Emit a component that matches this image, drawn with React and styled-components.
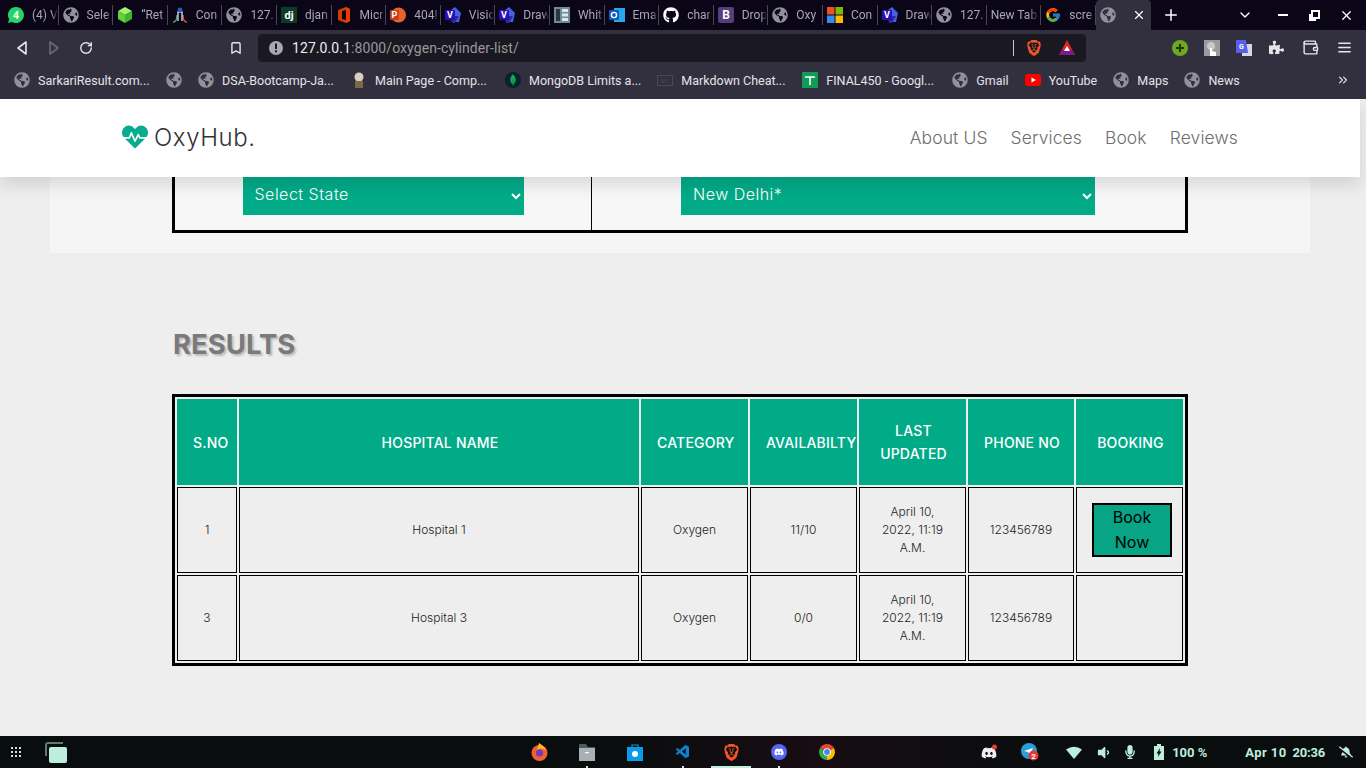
import React from "react";
import styled, { createGlobalStyle } from "styled-components";
import { FaGlobeAmericas, FaGithub, FaHeartbeat, FaDiscord, FaPuzzlePiece, FaMicrophone, FaVolumeDown, FaBellSlash } from "react-icons/fa";
import { FcGoogle } from "react-icons/fc";
import { VscVscode } from "react-icons/vsc";
import { SiBrave, SiMongodb } from "react-icons/si";
import { LuChevronDown, LuPlus, LuX, LuRotateCw, LuBookmark, LuMenu, LuWallet, LuChevronsRight } from "react-icons/lu";

const teal = "#02ab88";
const mint = "#bdeedd";
const chromeBg = "#32303f";

const GlobalStyle = createGlobalStyle`
  html, body { margin: 0; padding: 0; height: 100%; overflow: hidden; }
  body { font-family: "Inter", "Noto Sans", sans-serif; background: #eee; }
  #root { height: 100%; }
  * { box-sizing: border-box; }
`;

const Screen = styled.div`
  width: 1366px;
  height: 768px;
  display: flex;
  flex-direction: column;
  overflow: hidden;
`;

/* browser chrome */
const TabStrip = styled.div`
  height: 30px;
  flex: none;
  display: flex;
  align-items: center;
  padding-left: 4px;
  background: #0a0618;
  font: 12px "Roboto", sans-serif;
`;

const Tab = styled.div`
  width: ${(p) => (p.$active ? "55px" : "54.6px")};
  height: ${(p) => (p.$active ? "30px" : "20px")};
  flex: none;
  display: flex;
  align-items: center;
  gap: 8px;
  padding-left: 4px;
  color: #a9a7b2;
  white-space: nowrap;
  overflow: hidden;
  border-right: 1px solid ${(p) => (p.$active ? "transparent" : "#4a4856")};
  background: ${(p) => (p.$active ? chromeBg : "transparent")};
  border-radius: ${(p) => (p.$active ? "4px 4px 0 0" : "0")};
  svg { flex: none; }
`;

const TabTitle = styled.span`
  flex: 1;
  overflow: hidden;
  -webkit-mask-image: linear-gradient(to right, #000 75%, transparent 100%);
  mask-image: linear-gradient(to right, #000 75%, transparent 100%);
`;

const StripButton = styled.div`
  flex: none;
  width: ${(p) => p.$width}px;
  margin-left: ${(p) => p.$left || 0}px;
  display: flex;
  justify-content: center;
  align-items: center;
  color: #fff;
`;

const Toolbar = styled.div`
  height: 35px;
  flex: none;
  display: flex;
  align-items: center;
  background: ${chromeBg};
`;

const ToolButton = styled.div`
  flex: none;
  width: ${(p) => p.$width || 32}px;
  margin-left: ${(p) => p.$left || 0}px;
  display: flex;
  justify-content: center;
  align-items: center;
  color: ${(p) => p.$color || "#e6e5ea"};
`;

const AddressBar = styled.div`
  width: 828px;
  height: 28px;
  margin-left: 6px;
  flex: none;
  display: flex;
  align-items: center;
  padding-left: 10px;
  border-radius: 4px;
  background: #1a1922;
  font: 14px "Roboto", sans-serif;
  letter-spacing: 0.08px;
  color: #99979f;
`;

const Host = styled.span`
  color: #ececf0;
  margin-left: 8px;
`;

const AddressEnd = styled.div`
  margin-left: auto;
  display: flex;
  align-items: center;
  gap: 17px;
  padding-right: 11px;
`;

const Divider = styled.span`
  width: 1px;
  height: 16px;
  margin-right: -5px;
  background: #c9c8ce;
`;

const BookmarkBar = styled.div`
  height: 34px;
  flex: none;
  display: flex;
  align-items: center;
  gap: 16px;
  padding: 0 14px 4px;
  background: ${chromeBg};
  font: 12.5px "Roboto", sans-serif;
  color: #e4e3e8;
`;

const BookmarkItem = styled.div`
  display: flex;
  align-items: center;
  gap: 8px;
  white-space: nowrap;
  svg { flex: none; }
`;

const BookmarkLabel = styled.span`
  min-width: ${(p) => p.$width || 0}px;
`;

const MoreButton = styled.div`
  margin-left: auto;
  margin-right: 2px;
  display: flex;
`;

/* page */
const Page = styled.main`
  flex: 1;
  min-height: 0;
  overflow: hidden;
  background: #eee;
`;

const Navbar = styled.header`
  position: relative;
  z-index: 2;
  width: 1360px;
  height: 78px;
  display: flex;
  align-items: center;
  justify-content: space-between;
  padding: 0 122px 2px;
  background: #fff;
  box-shadow: 0 8px 16px rgba(0, 0, 0, 0.12);
`;

const Logo = styled.a`
  display: flex;
  align-items: center;
  gap: 6px;
  font-size: 24px;
  font-weight: 300;
  letter-spacing: 0.6px;
  color: #333;
  svg { color: #06ad8c; }
`;

const NavLinks = styled.nav`
  display: flex;
  gap: 23px;
`;

const NavLink = styled.a`
  font-size: 17.5px;
  font-weight: 300;
  letter-spacing: 0.1px;
  color: #6e6e6e;
`;

const FilterPanel = styled.section`
  width: 1260px;
  margin-left: 50px;
  padding: 0 122px 20px;
  background: #f5f5f5;
`;

const FilterTable = styled.div`
  display: grid;
  grid-template-columns: 416px 1fr;
  border: 3px solid #000;
  border-top: 0;
  background: #f7f7f7;
`;

const FilterCell = styled.div`
  display: flex;
  justify-content: center;
  padding: 0 ${(p) => (p.$divided ? "1px" : "0")} 15px 0;
  border-left: ${(p) => (p.$divided ? "1px solid #000" : "0")};
`;

const FilterSelect = styled.select`
  width: ${(p) => p.$width}px;
  height: 38px;
  padding: 0 4px 4px 8px;
  border: 0;
  border-radius: 0;
  background-color: ${teal};
  color: #fff;
  font-family: "Inter", sans-serif;
  font-size: 16px;
  font-weight: 300;
  letter-spacing: 0.5px;
`;

const Results = styled.section`
  padding: 73px 0 0 172px;
`;

const ResultsTitle = styled.h2`
  margin: 0 0 32px;
  padding-left: 1px;
  height: 36px;
  font-size: 27.5px;
  line-height: 36px;
  font-weight: 700;
  color: #7a7a7a;
  text-shadow: 2px 2px 2px #bdbdbd;
`;

const Table = styled.table`
  width: 1016px;
  table-layout: fixed;
  border-collapse: separate;
  border-spacing: 2px;
  border: 3px solid #000;
  background: #eee;
`;

const HeadCell = styled.th`
  width: ${(p) => p.$width}px;
  height: 86px;
  padding: 0 14px 0 16px;
  background: ${teal};
  color: #fff;
  font-size: 14px;
  line-height: 23px;
  font-weight: 500;
  letter-spacing: 0.2px;
  text-align: center;
`;

const Cell = styled.td`
  height: 86px;
  padding: 0 15px;
  border: 1px solid #000;
  color: #222;
  font-size: 12px;
  line-height: 18px;
  font-weight: 300;
  text-align: center;
`;

const BookButton = styled.button`
  display: block;
  width: 80px;
  height: 54px;
  margin: 0 auto;
  padding: 0 12px;
  border: 2px solid #000;
  background: #07a586;
  color: #000;
  font-family: "Inter", sans-serif;
  font-size: 16px;
  line-height: 25px;
  font-weight: 400;
`;

/* desktop taskbar */
const Taskbar = styled.footer`
  height: 32px;
  flex: none;
  display: grid;
  grid-template-columns: 1fr auto 1fr;
  align-items: center;
  background: linear-gradient(90deg, #0a0d0e 45%, #170d12 60%, #0a0d0e 75%);
  color: ${mint};
`;

const TaskLeft = styled.div`
  display: flex;
  align-items: center;
  gap: 24px;
  padding-left: 11px;
`;

const TaskCenter = styled.div`
  display: flex;
`;

const TaskIcon = styled.div`
  position: relative;
  width: 48px;
  height: 32px;
  display: flex;
  justify-content: center;
  align-items: center;
  &::after {
    content: "";
    position: absolute;
    bottom: 0;
    left: ${(p) => (p.$state === "active" ? "4px" : "23px")};
    right: ${(p) => (p.$state === "active" ? "4px" : "23px")};
    height: 2px;
    background: ${(p) => (p.$state ? mint : "transparent")};
  }
`;

const Tray = styled.div`
  display: flex;
  align-items: center;
  justify-content: flex-end;
  padding-right: 12px;
  font: 700 13px "Roboto", sans-serif;
  white-space: nowrap;
`;

const TraySlot = styled.div`
  display: flex;
  align-items: center;
  justify-content: center;
  flex: none;
  margin-left: ${(p) => p.$left || 0}px;
  width: ${(p) => (p.$width ? `${p.$width}px` : "auto")};
  letter-spacing: ${(p) => p.$tracking || 0}px;
`;

const Globe = ({ size = 15 }) => <FaGlobeAmericas size={size} color="#92919b" />;

const Whatsapp = () => (
  <svg width="16" height="16" viewBox="0 0 16 16">
    <path d="M8 0a8 8 0 0 0-6.8 12.2L0 16l3.9-1.1A8 8 0 1 0 8 0z" fill="#25d366" />
    <text x="8" y="11.6" fontSize="10.5" fontWeight="700" fill="#fff" textAnchor="middle" fontFamily="Roboto">4</text>
  </svg>
);
const Cube = () => (
  <svg width="16" height="16" viewBox="0 0 16 16">
    <path d="M8 0l7 4-7 4-7-4z" fill="#a6f06a" />
    <path d="M1 4l7 4v8l-7-4z" fill="#5fd33c" />
    <path d="M15 4l-7 4v8l7-4z" fill="#3fb52d" />
  </svg>
);
const Conda = () => (
  <svg width="16" height="16" viewBox="0 0 16 16" fill="none">
    <path d="M1 15c3 0 4-3 4-7" stroke="#4caf50" strokeWidth="1.4" />
    <path d="M15 15c-3 0-4-3-4-7" stroke="#e0523a" strokeWidth="1.4" />
    <path d="M6 14V5h4v9" stroke="#c7d3e6" strokeWidth="1.4" />
    <circle cx="8" cy="3" r="2.4" fill="#2d55b5" />
  </svg>
);
const Django = () => (
  <svg width="16" height="16" viewBox="0 0 16 16">
    <rect width="16" height="16" fill="#0c3c26" />
    <text x="8" y="12" fontSize="11" fontWeight="700" fill="#fff" textAnchor="middle" fontFamily="Roboto">dj</text>
  </svg>
);
const Office = () => (
  <svg width="16" height="16" viewBox="0 0 16 16">
    <path d="M2 3l8-3 4 2v12l-4 2-8-3z" fill="#d83b01" />
    <path d="M6 4l4-1v10l-4-1z" fill="#0a0618" />
    <path d="M10 0l4 2v12l-4 2z" fill="#eb3c00" />
  </svg>
);
const Powerpoint = () => (
  <svg width="16" height="16" viewBox="0 0 16 16">
    <circle cx="8.5" cy="8" r="7.5" fill="#e8622c" />
    <rect x="0" y="3" width="9" height="10" rx="1" fill="#c43e1c" />
    <text x="4.5" y="11.3" fontSize="9" fontWeight="700" fill="#fff" textAnchor="middle" fontFamily="Roboto">P</text>
  </svg>
);
const Visio = () => (
  <svg width="16" height="16" viewBox="0 0 16 16">
    <path d="M6 3l4-3 6 6-2 9H7z" fill="#4560e0" />
    <path d="M6 9h8l-4 7H7z" fill="#3126a8" />
    <rect x="0" y="3" width="10" height="10" rx="1" fill="#2a0fb5" />
    <text x="5" y="11.2" fontSize="9" fontWeight="700" fill="#fff" textAnchor="middle" fontFamily="Roboto">V</text>
  </svg>
);
const Whiteboard = () => (
  <svg width="16" height="16" viewBox="0 0 16 16">
    <rect width="16" height="16" fill="#6f8a9a" />
    <rect x="2" y="2" width="4" height="12" fill="#2a3640" />
    <rect x="8" y="2" width="6" height="3" fill="#dfe6ea" />
    <rect x="8" y="6.5" width="6" height="3" fill="#dfe6ea" />
    <rect x="8" y="11" width="6" height="3" fill="#dfe6ea" />
  </svg>
);
const Outlook = () => (
  <svg width="16" height="16" viewBox="0 0 16 16">
    <rect x="5" y="1" width="11" height="14" fill="#28a8ea" />
    <rect x="0" y="3" width="10" height="10" rx="1" fill="#0f5cc0" />
    <circle cx="5" cy="8" r="2.6" fill="none" stroke="#fff" strokeWidth="1.4" />
  </svg>
);
const Bootstrap = () => (
  <svg width="16" height="16" viewBox="0 0 16 16">
    <rect width="16" height="16" rx="2" fill="#563d7c" />
    <text x="8" y="12.4" fontSize="12" fontWeight="700" fill="#fff" textAnchor="middle" fontFamily="Roboto">B</text>
  </svg>
);
const Windows = () => (
  <svg width="16" height="16" viewBox="0 0 16 16">
    <rect width="7.5" height="7.5" fill="#f25022" />
    <rect x="8.5" width="7.5" height="7.5" fill="#7fba00" />
    <rect y="8.5" width="7.5" height="7.5" fill="#2f8ff0" />
    <rect x="8.5" y="8.5" width="7.5" height="7.5" fill="#ffb900" />
  </svg>
);
const Info = () => (
  <svg width="16" height="16" viewBox="0 0 16 16">
    <circle cx="8" cy="8" r="7" fill="#a9a8b0" />
    <rect x="7" y="3.5" width="2" height="5.5" fill="#1a1922" />
    <rect x="7" y="10.3" width="2" height="2" fill="#1a1922" />
  </svg>
);
const Triangle = ({ dir = "left", color }) => (
  <svg width="14" height="16" viewBox="0 0 14 16" fill="none" stroke={color} strokeWidth="1.6" strokeLinejoin="round">
    <path d={dir === "left" ? "M11 2v12L3 8z" : "M3 2v12l8-6z"} />
  </svg>
);
const Bat = () => (
  <svg width="16" height="15" viewBox="0 0 16 15">
    <path d="M8 0l8 15H0z" fill="#e0222e" />
    <path d="M0 15l3-5h10l3 5z" fill="#7c1a8c" />
    <path d="M8 6l3 5H5z" fill="#fff" />
  </svg>
);
const PlusBadge = () => (
  <svg width="16" height="16" viewBox="0 0 16 16">
    <circle cx="8" cy="8" r="8" fill="#6fa81e" />
    <path d="M8 4v8M4 8h8" stroke="#20330a" strokeWidth="2" />
  </svg>
);
const HandTile = () => (
  <svg width="16" height="16" viewBox="0 0 16 16">
    <rect width="16" height="16" fill="#9c9c9c" />
    <circle cx="7" cy="6" r="4" fill="#c9c9c9" />
    <path d="M6 16V8h2v3l4 1v4z" fill="#fff" />
  </svg>
);
const Translate = () => (
  <svg width="16" height="16" viewBox="0 0 16 16">
    <rect x="6" y="4" width="10" height="12" fill="#d8d8dc" />
    <path d="M0 0h10l2 13H0z" fill="#5a5ef0" />
    <text x="5.5" y="9" fontSize="7" fontWeight="700" fill="#fff" textAnchor="middle" fontFamily="Roboto">G</text>
  </svg>
);
const Youtube = () => (
  <svg width="16" height="12" viewBox="0 0 16 12">
    <rect width="16" height="12" rx="3" fill="#f00" />
    <path d="M6.5 3.5v5L11 6z" fill="#fff" />
  </svg>
);
const Sheets = () => (
  <svg width="16" height="16" viewBox="0 0 16 16">
    <rect width="16" height="16" rx="1" fill="#0f9d58" />
    <path d="M3 5h10M8 5v8" stroke="#fff" strokeWidth="1.6" />
  </svg>
);
const Avatar = () => (
  <svg width="16" height="16" viewBox="0 0 16 16">
    <circle cx="8" cy="5" r="4.5" fill="#d6d0bd" />
    <rect x="4" y="9" width="8" height="7" fill="#7a6a44" />
  </svg>
);
const Mongo = () => (
  <svg width="16" height="16" viewBox="0 0 16 16">
    <circle cx="8" cy="8" r="8" fill="#06232e" />
    <SiMongodb x="2" y="2" size={12} color="#13aa52" />
  </svg>
);
const MarkdownBox = () => (
  <svg width="16" height="11" viewBox="0 0 16 11">
    <rect x="0.5" y="0.5" width="15" height="10" fill="none" stroke="#4a4856" />
    <text x="8" y="8" fontSize="6" fill="#4a4856" textAnchor="middle" fontFamily="Roboto">M↓</text>
  </svg>
);
const Firefox = () => (
  <svg width="17" height="18" viewBox="0 0 17 18">
    <circle cx="8.5" cy="10" r="8" fill="#f2612c" />
    <path d="M8 0c3 2 6 4 7 8-3-3-6-3-9-1z" fill="#fdbb2c" />
    <circle cx="8.5" cy="10" r="3.6" fill="#6e3cc2" />
  </svg>
);
const Files = () => (
  <svg width="16" height="18" viewBox="0 0 16 18">
    <path d="M0 1h7l2 3h7v3H0z" fill="#4d5a60" />
    <rect y="5" width="16" height="13" fill="#a7b0b5" />
    <rect x="6" y="9" width="4" height="1.2" fill="#fff" />
  </svg>
);
const Store = () => (
  <svg width="16" height="18" viewBox="0 0 16 18">
    <path d="M5 4V2h6v2" fill="none" stroke="#0b9be8" strokeWidth="1.2" />
    <rect y="4" width="16" height="14" fill="#0b9be8" />
    <circle cx="8" cy="11" r="3" fill="#fff" />
  </svg>
);
const DiscordBadge = () => (
  <svg width="16" height="16" viewBox="0 0 16 16">
    <circle cx="8" cy="8" r="8" fill="#5865f2" />
    <FaDiscord x="3" y="3" size={10} color="#fff" />
  </svg>
);
const DiscordTray = () => (
  <svg width="17" height="16" viewBox="0 0 17 16">
    <FaDiscord y="1" size={16} color="#eee" />
    <circle cx="13.5" cy="3" r="2.5" fill="#e53935" />
  </svg>
);
const Chrome = () => (
  <svg width="16" height="16" viewBox="0 0 16 16">
    <path d="M8 8L1.1 4A8 8 0 0 1 14.9 4z" fill="#ea4335" />
    <path d="M8 8l6.9-4A8 8 0 0 1 8 16z" fill="#fbbc04" />
    <path d="M8 8v8A8 8 0 0 1 1.1 4z" fill="#34a853" />
    <circle cx="8" cy="8" r="3.8" fill="#fff" />
    <circle cx="8" cy="8" r="2.9" fill="#4285f4" />
  </svg>
);
const Telegram = () => (
  <svg width="18" height="18" viewBox="0 0 18 18">
    <circle cx="8" cy="8" r="8" fill="#2a9ed8" />
    <path d="M3 8l9-3-3 7-2-3z" fill="#fff" />
    <circle cx="12.5" cy="12.5" r="5" fill="#e53935" />
    <text x="12.5" y="15.5" fontSize="8" fill="#fff" textAnchor="middle" fontFamily="Roboto">2</text>
  </svg>
);
const WifiFan = () => (
  <svg width="16" height="13" viewBox="0 0 16 13">
    <path d="M0 3.5Q8-2 16 3.5L8 13z" fill={mint} />
  </svg>
);
const Battery = () => (
  <svg width="10" height="16" viewBox="0 0 10 16">
    <rect x="3" width="4" height="2" fill={mint} />
    <rect y="2" width="10" height="14" fill={mint} />
    <path d="M6 4L2.5 9.5h2L4 13l3.5-5.5h-2z" fill="#0a0d0e" />
  </svg>
);
const Dots = () => (
  <svg width="10" height="10" viewBox="0 0 10 10" fill={mint}>
    {[0, 4, 8].flatMap((y) =>
      [0, 4, 8].map((x) => <rect key={`${x}${y}`} x={x} y={y} width="2" height="2" />)
    )}
  </svg>
);
const WindowsStack = () => (
  <svg width="22" height="21" viewBox="0 0 22 21">
    <path d="M1 14V3a2 2 0 0 1 2-2h15" fill="none" stroke="#5f7a72" strokeWidth="2" />
    <rect x="4" y="5" width="18" height="16" rx="2" fill={mint} />
  </svg>
);

const tabs = [
  [Whatsapp, "(4) V"],
  [Globe, "Sele"],
  [Cube, "“Ret"],
  [Conda, "Con"],
  [Globe, "127."],
  [Django, "djan"],
  [Office, "Micr"],
  [Powerpoint, "404!"],
  [Visio, "Visio"],
  [Visio, "Draw"],
  [Whiteboard, "Whit"],
  [Outlook, "Ema"],
  [() => <FaGithub size={16} color="#fff" />, "char"],
  [Bootstrap, "Drop"],
  [Globe, "Oxy"],
  [Windows, "Con"],
  [Visio, "Draw"],
  [Globe, "127."],
  [null, "New Tab"],
  [FcGoogle, "scre"],
];

const bookmarks = [
  [Globe, "SarkariResult.com...", 112],
  [Globe, ""],
  [Globe, "DSA-Bootcamp-Ja...", 113],
  [Avatar, "Main Page - Comp...", 114],
  [Mongo, "MongoDB Limits a...", 112],
  [MarkdownBox, "Markdown Cheat...", 105],
  [Sheets, "FINAL450 - Googl...", 110],
  [Globe, "Gmail"],
  [Youtube, "YouTube"],
  [Globe, "Maps"],
  [Globe, "News"],
];

const columns = [
  ["S.NO", 60],
  ["HOSPITAL NAME", 400],
  ["CATEGORY", 107],
  ["AVAILABILTY", 107],
  ["LAST UPDATED", 107],
  ["PHONE NO", 106],
  ["BOOKING", 107],
];

const rows = [
  { sno: 1, name: "Hospital 1", stock: "11/10", canBook: true },
  { sno: 3, name: "Hospital 3", stock: "0/0", canBook: false },
];

const BrowserChrome = () => (
  <>
    <TabStrip>
      {tabs.map(([Icon, title], i) => (
        <Tab key={i}>
          {Icon && <Icon size={16} />}
          <TabTitle>{title}</TabTitle>
        </Tab>
      ))}
      <Tab $active>
        <Globe size={16} />
        <TabTitle>(</TabTitle>
        <LuX size={14} color="#fff" style={{ marginRight: 6 }} />
      </Tab>
      <StripButton $width={40}><LuPlus size={18} /></StripButton>
      <StripButton $width={20} $left={44}><LuChevronDown size={16} /></StripButton>
      <StripButton $width={32} $left={12}><svg width="10" height="2"><rect width="10" height="2" fill="#fff" /></svg></StripButton>
      <StripButton $width={32}><svg width="11" height="11" fill="none" stroke="#fff" strokeWidth="2"><path d="M3 1h7v7H3zM1 4v6h6" /></svg></StripButton>
      <StripButton $width={32}><LuX size={15} /></StripButton>
    </TabStrip>
    <Toolbar>
      <ToolButton $left={6}><Triangle color="#e6e5ea" /></ToolButton>
      <ToolButton><Triangle dir="right" color="#6d6b78" /></ToolButton>
      <ToolButton><LuRotateCw size={14} strokeWidth={2.4} /></ToolButton>
      <ToolButton $left={118} $width={32}><LuBookmark size={14} strokeWidth={2.4} /></ToolButton>
      <AddressBar>
        <Info />
        <Host>127.0.0.1</Host>:8000/oxygen-cylinder-list/
        <AddressEnd>
          <Divider />
          <SiBrave size={16} color="#f1562b" />
          <Bat />
        </AddressEnd>
      </AddressBar>
      <ToolButton $left={78}><PlusBadge /></ToolButton>
      <ToolButton><HandTile /></ToolButton>
      <ToolButton><Translate /></ToolButton>
      <ToolButton><FaPuzzlePiece size={15} /></ToolButton>
      <ToolButton $left={2}><LuWallet size={17} /></ToolButton>
      <ToolButton $left={2}><LuMenu size={17} /></ToolButton>
    </Toolbar>
    <BookmarkBar>
      {bookmarks.map(([Icon, label, width], i) => (
        <BookmarkItem key={i}>
          <Icon size={16} />
          {label && <BookmarkLabel $width={width}>{label}</BookmarkLabel>}
        </BookmarkItem>
      ))}
      <MoreButton><LuChevronsRight size={14} /></MoreButton>
    </BookmarkBar>
  </>
);

const DesktopBar = () => (
  <Taskbar>
    <TaskLeft>
      <Dots />
      <WindowsStack />
    </TaskLeft>
    <TaskCenter>
      <TaskIcon><Firefox /></TaskIcon>
      <TaskIcon $state="dot"><Files /></TaskIcon>
      <TaskIcon><Store /></TaskIcon>
      <TaskIcon $state="dot"><VscVscode size={16} color="#0a84d0" /></TaskIcon>
      <TaskIcon $state="active"><SiBrave size={17} color="#f1562b" /></TaskIcon>
      <TaskIcon $state="dot"><DiscordBadge /></TaskIcon>
      <TaskIcon><Chrome /></TaskIcon>
    </TaskCenter>
    <Tray>
      <TraySlot $width={20}><DiscordTray /></TraySlot>
      <TraySlot $width={20} $left={21}><Telegram /></TraySlot>
      <TraySlot $width={18} $left={25}><WifiFan /></TraySlot>
      <TraySlot $width={18} $left={11}><FaVolumeDown size={15} /></TraySlot>
      <TraySlot $width={18} $left={9}><FaMicrophone size={14} /></TraySlot>
      <TraySlot $width={12} $left={14}><Battery /></TraySlot>
      <TraySlot $left={7}>100 %</TraySlot>
      <TraySlot $left={38} $tracking={0.4}>Apr 10</TraySlot>
      <TraySlot $left={6} $tracking={-0.2}>20:36</TraySlot>
      <TraySlot $width={16} $left={13}><FaBellSlash size={14} /></TraySlot>
    </Tray>
  </Taskbar>
);

const App = () => (
  <Screen>
    <GlobalStyle />
    <BrowserChrome />
    <Page>
      <Navbar>
        <Logo><FaHeartbeat size={26} />OxyHub.</Logo>
        <NavLinks>
          <NavLink>About US</NavLink>
          <NavLink>Services</NavLink>
          <NavLink>Book</NavLink>
          <NavLink>Reviews</NavLink>
        </NavLinks>
      </Navbar>
      <FilterPanel>
        <FilterTable>
          <FilterCell>
            <FilterSelect $width={281} defaultValue="Select State">
              <option>Select State</option>
            </FilterSelect>
          </FilterCell>
          <FilterCell $divided>
            <FilterSelect $width={414} defaultValue="New Delhi*">
              <option>New Delhi*</option>
            </FilterSelect>
          </FilterCell>
        </FilterTable>
      </FilterPanel>
      <Results>
        <ResultsTitle>RESULTS</ResultsTitle>
        <Table>
          <thead>
            <tr>
              {columns.map(([label, width]) => (
                <HeadCell key={label} $width={width}>{label}</HeadCell>
              ))}
            </tr>
          </thead>
          <tbody>
            {rows.map((row) => (
              <tr key={row.sno}>
                <Cell>{row.sno}</Cell>
                <Cell>{row.name}</Cell>
                <Cell>Oxygen</Cell>
                <Cell>{row.stock}</Cell>
                <Cell>April 10, 2022, 11:19 A.M.</Cell>
                <Cell>123456789</Cell>
                <Cell>{row.canBook && <BookButton>Book Now</BookButton>}</Cell>
              </tr>
            ))}
          </tbody>
        </Table>
      </Results>
    </Page>
    <DesktopBar />
  </Screen>
);

export default App;
